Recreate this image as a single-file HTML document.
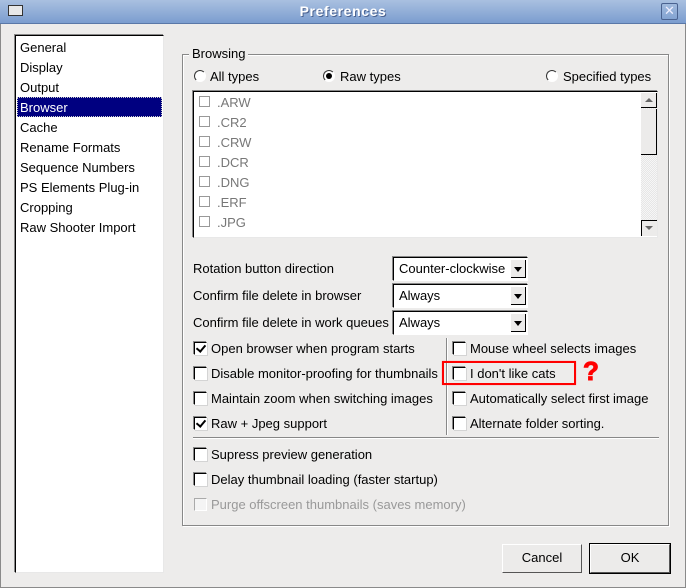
<!DOCTYPE html><html><head><style>
*{margin:0;padding:0;box-sizing:border-box}
body{width:686px;height:588px;background:#edeceb;font:13px "Liberation Sans",sans-serif;color:#000;position:relative;overflow:hidden}
.a{position:absolute;white-space:nowrap}
.cb{position:absolute;width:13px;height:13px;background:#fff;border:1px solid;border-color:#000 #fff #fff #000;box-shadow:-1px -1px 0 #888,1px 1px 0 #d4d4d4}
.cb.g{background:#f4f4f4;border-color:#aaa #fff #fff #aaa;box-shadow:none}
.cb.k::after{content:"";position:absolute;left:3px;top:0px;width:4px;height:7px;border:solid #000;border-width:0 2px 2px 0;transform:rotate(40deg)}
.lb{position:absolute;width:11px;height:11px;border:1px solid #999;background:#fff}
.li{color:#777}
.cmb{position:absolute;left:393px;width:135px;height:24px;background:#fff;border:1px solid;border-color:#000 #fff #fff #000;box-shadow:-1px -1px 0 #888}
.cmb span{position:absolute;left:5px;top:3px}
.cmb i{position:absolute;right:1px;top:2px;width:15px;height:18px;background:#ecebea;border-right:1px solid #000;border-bottom:1px solid #000}
.cmb i::after{content:"";position:absolute;left:3px;top:7px;border:4px solid transparent;border-top:5px solid #000;border-bottom:0}
.rd{position:absolute;width:12px;height:12px;border-radius:50%;background:#fff;border:1px solid;border-color:#333 #fff #fff #333}
.btn{position:absolute;background:#ecebea;border:1px solid;border-color:#fff #555 #555 #fff;text-align:center;line-height:26px}
</style></head><body>
<div class="a" style="left:0;top:0;width:686px;height:24px;background:linear-gradient(#a9c0e0,#7b9dcf);border-bottom:1px solid #5a78a8"></div>
<div class="a" style="left:8px;top:5px;width:15px;height:11px;border:1px solid #333;background:#e8e8e8"></div>
<div class="a" style="left:0;top:3px;width:686px;text-align:center;color:#fff;font-weight:bold;font-size:14px;letter-spacing:0.6px;text-shadow:1px 1px 0 #4a6290">Preferences</div>
<div class="a" style="left:661px;top:3px;width:17px;height:17px;border:1px solid #4a6290;border-radius:2px;color:#eef;font-size:13px;line-height:14px;text-align:center">✕</div>
<div class="a" style="left:0;top:24px;width:686px;height:564px;border:1px solid #8a8a8a;border-top:0"></div>

<div class="a" style="left:15px;top:35px;width:149px;height:538px;background:#fff;border:1px solid;border-color:#000 #e8e8e8 #e8e8e8 #000;box-shadow:-1px -1px 0 #888"></div>
<div class="a" style="left:17px;top:97px;width:145px;height:20px;background:#000080;border:1px dotted #ccc"></div>
<div class="a" style="left:20px;top:38px;line-height:20px">General<br>Display<br>Output<br><span style="color:#fff">Browser</span><br>Cache<br>Rename Formats<br>Sequence Numbers<br>PS Elements Plug-in<br>Cropping<br>Raw Shooter Import</div>

<div class="a" style="left:182px;top:54px;width:487px;height:472px;border:1px solid #888;box-shadow:inset 1px 1px 0 #fff,1px 1px 0 #fff"></div>
<div class="a" style="left:189px;top:46px;background:#edeceb;padding:0 3px">Browsing</div>
<div class="rd" style="left:194px;top:70px"></div><div class="a" style="left:210px;top:69px">All types</div>
<div class="rd" style="left:323px;top:70px"></div><div class="a" style="left:326px;top:73px;width:6px;height:6px;border-radius:50%;background:#000"></div><div class="a" style="left:340px;top:69px">Raw types</div>
<div class="rd" style="left:546px;top:70px"></div><div class="a" style="left:563px;top:69px">Specified types</div>

<div class="a" style="left:193px;top:91px;width:465px;height:147px;background:#fff;border:1px solid;border-color:#000 #e8e8e8 #e8e8e8 #000;box-shadow:-1px -1px 0 #888"></div>
<div class="a" style="left:641px;top:93px;width:16px;height:143px;background:repeating-conic-gradient(#e6e6e6 0 25%,#f6f6f6 0 50%) 0 0/2px 2px"></div>
<div class="a" style="left:641px;top:93px;width:16px;height:15px;background:#ecebea;border-right:1px solid #000;border-bottom:1px solid #000"></div>
<div class="a" style="left:645px;top:98px;border:4px solid transparent;border-bottom:4px solid #666;border-top:0"></div>
<div class="a" style="left:641px;top:109px;width:16px;height:46px;background:#ecebea;border-right:1px solid #000;border-bottom:1px solid #000"></div>
<div class="a" style="left:641px;top:220px;width:16px;height:16px;background:#ecebea;border-left:1px solid #000;border-top:1px solid #000"></div>
<div class="a" style="left:645px;top:226px;border:4px solid transparent;border-top:4px solid #666;border-bottom:0"></div>
<div class="lb" style="left:199px;top:96px"></div><div class="a li" style="left:217px;top:95px">.ARW</div>
<div class="lb" style="left:199px;top:116px"></div><div class="a li" style="left:217px;top:115px">.CR2</div>
<div class="lb" style="left:199px;top:136px"></div><div class="a li" style="left:217px;top:135px">.CRW</div>
<div class="lb" style="left:199px;top:156px"></div><div class="a li" style="left:217px;top:155px">.DCR</div>
<div class="lb" style="left:199px;top:176px"></div><div class="a li" style="left:217px;top:175px">.DNG</div>
<div class="lb" style="left:199px;top:196px"></div><div class="a li" style="left:217px;top:195px">.ERF</div>
<div class="lb" style="left:199px;top:216px"></div><div class="a li" style="left:217px;top:215px">.JPG</div>

<div class="a" style="left:193px;top:261px">Rotation button direction</div>
<div class="a" style="left:193px;top:288px">Confirm file delete in browser</div>
<div class="a" style="left:193px;top:315px">Confirm file delete in work queues</div>
<div class="cmb" style="top:257px"><span>Counter-clockwise</span><i></i></div>
<div class="cmb" style="top:284px"><span>Always</span><i></i></div>
<div class="cmb" style="top:311px"><span>Always</span><i></i></div>

<div class="cb k" style="left:194px;top:342px"></div><div class="a" style="left:211px;top:341px">Open browser when program starts</div>
<div class="cb" style="left:194px;top:367px"></div><div class="a" style="left:211px;top:366px">Disable monitor-proofing for thumbnails</div>
<div class="cb" style="left:194px;top:392px"></div><div class="a" style="left:211px;top:391px">Maintain zoom when switching images</div>
<div class="cb k" style="left:194px;top:417px"></div><div class="a" style="left:211px;top:416px">Raw + Jpeg support</div>
<div class="a" style="left:446px;top:338px;width:2px;height:97px;border-left:1px solid #888;border-right:1px solid #fff"></div>
<div class="cb" style="left:453px;top:342px"></div><div class="a" style="left:470px;top:341px">Mouse wheel selects images</div>
<div class="cb" style="left:453px;top:367px"></div><div class="a" style="left:470px;top:366px">I don't like cats</div>
<div class="cb" style="left:453px;top:392px"></div><div class="a" style="left:470px;top:391px">Automatically select first image</div>
<div class="cb" style="left:453px;top:417px"></div><div class="a" style="left:470px;top:416px">Alternate folder sorting.</div>
<div class="a" style="left:442px;top:361px;width:134px;height:24px;border:2px solid #f00;box-shadow:0 0 1px #f88"></div>
<div class="a" style="left:583px;top:356px;color:#f00;font-weight:bold;font-size:26px;-webkit-text-stroke:1px #f00">?</div>
<div class="a" style="left:193px;top:437px;width:466px;height:2px;border-top:1px solid #888;border-bottom:1px solid #fff"></div>

<div class="cb" style="left:194px;top:448px"></div><div class="a" style="left:211px;top:447px">Supress preview generation</div>
<div class="cb" style="left:194px;top:473px"></div><div class="a" style="left:211px;top:472px">Delay thumbnail loading (faster startup)</div>
<div class="cb g" style="left:194px;top:498px"></div><div class="a" style="left:211px;top:497px;color:#999">Purge offscreen thumbnails (saves memory)</div>

<div class="btn" style="left:502px;top:544px;width:80px;height:29px">Cancel</div>
<div class="a" style="left:589px;top:543px;width:82px;height:31px;border:1px solid #000"></div>
<div class="btn" style="left:590px;top:544px;width:80px;height:29px">OK</div>
</body></html>
